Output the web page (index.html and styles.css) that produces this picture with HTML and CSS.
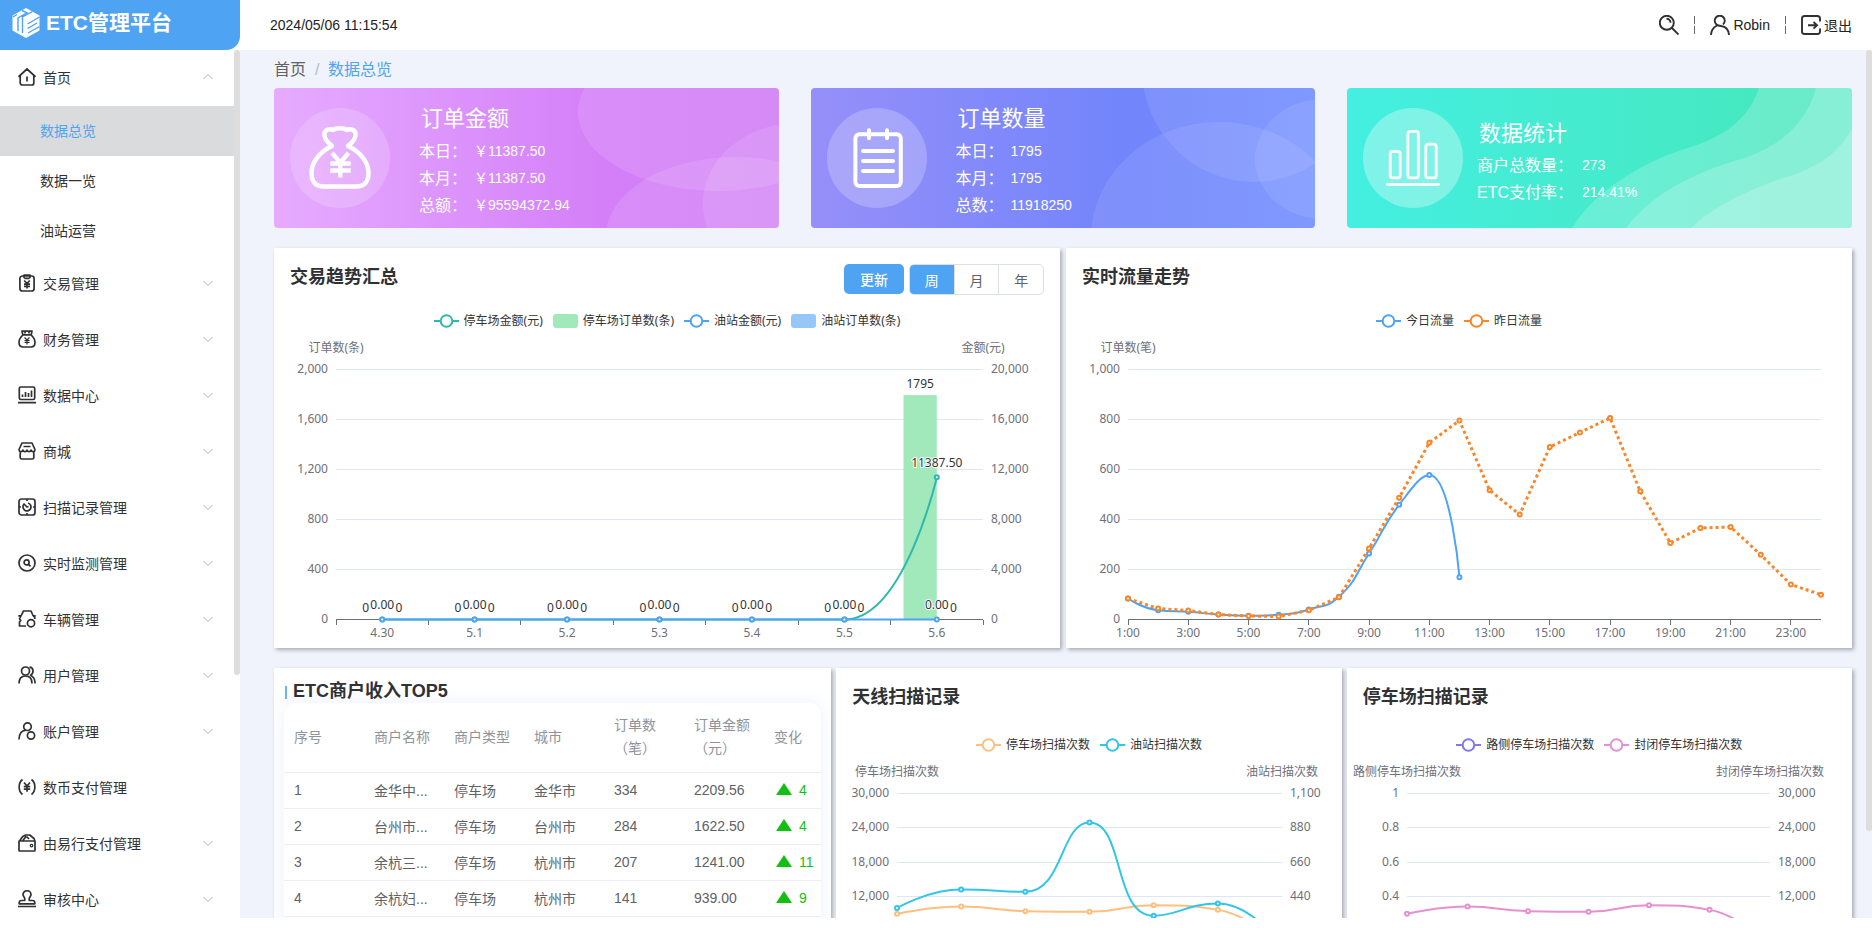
FILE: index.html
```html
<!DOCTYPE html>
<html lang="zh-CN">
<head>
<meta charset="utf-8">
<title>ETC管理平台</title>
<link rel="stylesheet" href="styles.css">
</head>
<body>
<svg class="defs" aria-hidden="true">
  <symbol id="chev" viewBox="0 0 12 12"><path d="M1.500 4L6 8.500 10.500 4" fill="none" stroke="#a9aeb8" stroke-width="1"/></symbol>
  <symbol id="i-home" viewBox="0 0 18 18"><path d="M.5 8.800L9 1l8.500 7.800M2.200 7.500v7.500a2 2 0 0 0 2 2h9.600a2 2 0 0 0 2-2V7.500M9 8.500v5"/></symbol>
  <symbol id="i-trade" viewBox="0 0 18 18"><rect x="1.900" y="2" width="14.200" height="15" rx="2.600"/><path d="M6 1.200h6v2.200l-1.200 1H7.200L6 3.400zM6.200 6.500L9 9.500l2.800-3M9 9.500V14.500M6 10.200h6M6 12.400h6"/></symbol>
  <symbol id="i-bag" viewBox="0 0 18 18"><path d="M4 1.200h10l-.8 3.600H4.800zM7 1v2.500M11 1v2.500M5 4.800C2.500 7 1 9.800 1 12.300c0 3 1.500 4.700 4 4.700h8c2.500 0 4-1.700 4-4.700 0-2.500-1.500-5.300-4-7.500"/><path stroke-width="1.200" d="M6.500 7.500L9 10l2.500-2.500M9 10v4.500M6.500 10.500h5M6.500 12.400h5"/></symbol>
  <symbol id="i-data" viewBox="0 0 18 18"><rect x="1.300" y="1" width="15.400" height="12.500" rx="1.500"/><path d="M0 16.600h18M4.500 8.500V11M7.500 6v5M10.500 7v4M13.500 4.500V11"/></symbol>
  <symbol id="i-shop" viewBox="0 0 18 18"><path d="M4 1h10l3 6.500c0 2.500-3.200 3-4 .5-.8 2.300-3.200 2.300-4 0-.8 2.300-3.200 2.300-4 0-.8 2.500-4 2-4-.5zM5.500 4.500h7M2.200 10.500v5q0 1.500 1.500 1.500h10.600q1.500 0 1.500-1.500v-5"/></symbol>
  <symbol id="i-scan" viewBox="0 0 18 18"><rect x="1" y="1" width="16" height="16" rx="2.500"/><path d="M10 5a4 4 0 1 1-4.300 1.600M5.500 5.500l3.500 3.500 1.500-.5M9 1v2M9 15v2M1 9h2M15 9h2"/></symbol>
  <symbol id="i-monitor" viewBox="0 0 18 18"><circle cx="9" cy="9" r="8"/><circle cx="8.600" cy="8.400" r="2.500"/><path d="M10.500 10.300l2 2"/></symbol>
  <symbol id="i-car" viewBox="0 0 18 18"><path d="M8 16H1.500v-4L2.800 10.500 1.500 9 3.200 5.500 5.500 1h7.500L15 5.500l1.800 2V9M.3 5.800h3M14.700 5.800h3"/><circle cx="13" cy="13.200" r="3.600"/></symbol>
  <symbol id="i-users" viewBox="0 0 18 18"><circle cx="7.500" cy="5" r="4"/><path d="M1 17.500c0-5 2.700-7.500 6.500-7.500s6.500 2.500 6.500 7.500M11.500 1.200c4.500.3 4.500 6.300 1 8 3 1.300 4.600 4 4.600 8.300"/></symbol>
  <symbol id="i-account" viewBox="0 0 18 18"><circle cx="9.500" cy="4.700" r="3.800"/><path d="M1 17.500C1 12 3.500 8.800 7.800 8.200"/><circle cx="13" cy="13.500" r="3.600"/></symbol>
  <symbol id="i-coin" viewBox="0 0 18 18"><path d="M4.500 1.500C0 5 0 13 4.500 16.500M13.500 1.500C18 5 18 13 13.500 16.500M6 4.500l3 3.500 3-3.500M9 8v5.800M5.800 8.700h6.400M5.800 11.200h6.400"/></symbol>
  <symbol id="i-wallet" viewBox="0 0 18 18"><path d="M1 7h16v9.200q0 .8-.8.800H1.800q-.8 0-.8-.8zM1.500 7l3.200-4.500 3-1.500h4l4.300 3.500L17 7M4.500 7l3.700-4.800M8.500 2.500L11 5"/><circle cx="13.500" cy="11.600" r="1.300" stroke-width="1.200"/></symbol>
  <symbol id="i-stamp" viewBox="0 0 18 18"><path d="M6.500 10.500C8 8 5 6.500 5 4.700a4 4 0 0 1 8 0C13 6.500 10 8 11.500 10.500h3q2.300 0 2.300 2.300v1H1.200v-1q0-2.300 2.300-2.300zM0 16.500h18"/></symbol>
</svg>

<div class="app">
  <aside class="side">
    <h1 class="brand">
      <svg width="28" height="30" viewBox="0 0 28 30" aria-hidden="true"><path fill="#fff" d="M14 0l13.500 7.500v15L14 30 .5 22.500v-15z"/><path d="M10 2.500l5 2.300-9 5v13.500M20.500 3.500L10.500 9v16M27.500 9L15.500 16M25 15l-9.500 5.500M27.500 18.500L16 25M5 6.500L1 9" fill="none" stroke="#4ea3f3" stroke-width="1.400"/></svg>
      <span>ETC管理平台</span>
    </h1>
    <nav class="menu">
      <button class="item"><svg><use href="#i-home"/></svg><span>首页</span><svg class="chev up"><use href="#chev"/></svg></button>
      <a class="sub on" href="#">数据总览</a>
      <a class="sub" href="#">数据一览</a>
      <a class="sub" href="#">油站运营</a>
      <button class="item"><svg><use href="#i-trade"/></svg><span>交易管理</span><svg class="chev"><use href="#chev"/></svg></button>
      <button class="item"><svg><use href="#i-bag"/></svg><span>财务管理</span><svg class="chev"><use href="#chev"/></svg></button>
      <button class="item"><svg><use href="#i-data"/></svg><span>数据中心</span><svg class="chev"><use href="#chev"/></svg></button>
      <button class="item"><svg><use href="#i-shop"/></svg><span>商城</span><svg class="chev"><use href="#chev"/></svg></button>
      <button class="item"><svg><use href="#i-scan"/></svg><span>扫描记录管理</span><svg class="chev"><use href="#chev"/></svg></button>
      <button class="item"><svg><use href="#i-monitor"/></svg><span>实时监测管理</span><svg class="chev"><use href="#chev"/></svg></button>
      <button class="item"><svg><use href="#i-car"/></svg><span>车辆管理</span><svg class="chev"><use href="#chev"/></svg></button>
      <button class="item"><svg><use href="#i-users"/></svg><span>用户管理</span><svg class="chev"><use href="#chev"/></svg></button>
      <button class="item"><svg><use href="#i-account"/></svg><span>账户管理</span><svg class="chev"><use href="#chev"/></svg></button>
      <button class="item"><svg><use href="#i-coin"/></svg><span>数币支付管理</span></button>
      <button class="item"><svg><use href="#i-wallet"/></svg><span>由易行支付管理</span><svg class="chev"><use href="#chev"/></svg></button>
      <button class="item"><svg><use href="#i-stamp"/></svg><span>审核中心</span><svg class="chev"><use href="#chev"/></svg></button>
      <i class="thumb side-thumb"></i>
    </nav>
  </aside>

  <div class="page">
    <header class="top">
      <time>2024/05/06 11:15:54</time>
      <div class="tools">
        <button aria-label="搜索"><svg viewBox="0 0 20 20"><circle cx="7.800" cy="7.800" r="7"/><path d="M13 13l6.500 6.500M7.500 3.800a4 4 0 0 1 4 4"/></svg></button>
        <i class="sep"></i>
        <button><svg viewBox="0 0 20 20"><path d="M13 9.500a5 5 0 1 0-6.500 0c1 .9 2.500 1.300 4.500 1.500 5 .6 7.700 4 8 9M1 20c.2-4.500 2.500-7.800 6-9.500"/></svg><span>Robin</span></button>
        <i class="sep"></i>
        <button><svg viewBox="0 0 20 20"><path d="M19 6.500V3.500Q19 1 16.500 1h-13Q1 1 1 3.500v13Q1 19 3.500 19h13q2.500 0 2.500-2.500v-3M7 10.300h9M12.500 7L16 10.300l-3.500 3.300"/></svg><span>退出</span></button>
      </div>
    </header>

    <main class="main">
      <nav class="crumbs"><a href="#">首页</a><i>/</i><a class="cur" href="#">数据总览</a></nav>

      <section class="cards">
        <article class="card">
          <svg class="bg" viewBox="0 0 505 140" preserveAspectRatio="none"><defs><linearGradient id="g1"><stop offset="0" stop-color="#e6abff"/><stop offset=".65" stop-color="#d47ff8"/><stop offset="1" stop-color="#d07cf5"/></linearGradient></defs><path fill="url(#g1)" d="M0 0h505v140H0z"/><g fill="#fff" fill-opacity=".11"><ellipse cx="444" cy="24" rx="140" ry="79"/><ellipse cx="461" cy="148" rx="129" ry="79"/><ellipse cx="524" cy="115" rx="95" ry="80"/></g></svg>
          <svg class="badge" viewBox="0 0 100 100"><circle cx="50" cy="50" r="50" fill="#fff" fill-opacity=".18"/><path d="M42 38C29 44 21.500 55 21.500 65c0 9 4.500 13.500 12 13.500h33c7.500 0 12-4.500 12-13.500 0-10-7.500-21-20.500-27 5-4 8.500-8 7.500-13-1-3.500-5-4.500-8.500-3-3-2.500-11-2.500-14 0-3.500-1.500-7.500-.5-8.500 3-1 5 2.500 9 7.500 13z" fill="none" stroke="#fff" stroke-width="4.500" stroke-linejoin="round"/><path d="M42 45l8.300 9.500L58.600 45M50.300 54v15.500M40.300 55.500h20.400M40.300 62.500h20.400" fill="none" stroke="#fff" stroke-width="4.300"/></svg>
          <div class="info"><h2>订单金额</h2><dl><dt>本日：</dt><dd>￥11387.50</dd><dt>本月：</dt><dd>￥11387.50</dd><dt>总额：</dt><dd>￥95594372.94</dd></dl></div>
        </article>
        <article class="card">
          <svg class="bg" viewBox="0 0 505 140" preserveAspectRatio="none"><defs><linearGradient id="g2"><stop offset="0" stop-color="#968ff9"/><stop offset=".62" stop-color="#7285fb"/><stop offset="1" stop-color="#738fff"/></linearGradient></defs><path fill="url(#g2)" d="M0 0h505v140H0z"/><g fill="#fff" fill-opacity=".09"><ellipse cx="443" cy="-20" rx="112" ry="114"/><ellipse cx="408" cy="150" rx="128" ry="116"/><ellipse cx="512" cy="71" rx="68" ry="60"/></g></svg>
          <svg class="badge" viewBox="0 0 100 100"><circle cx="50" cy="50" r="50" fill="#fff" fill-opacity=".22"/><g fill="none" stroke="#fff" stroke-width="4" stroke-linecap="round"><rect x="28.400" y="26.300" width="45.400" height="51.700" rx="4"/><path d="M42 22.300v8M60 22.300v8M36 43h30M36 53h30M36 63h30"/></g></svg>
          <div class="info"><h2>订单数量</h2><dl><dt>本日：</dt><dd>1795</dd><dt>本月：</dt><dd>1795</dd><dt>总数：</dt><dd>11918250</dd></dl></div>
        </article>
        <article class="card near">
          <svg class="bg" viewBox="0 0 505 140" preserveAspectRatio="none"><defs><linearGradient id="g3"><stop offset="0" stop-color="#44efe1"/><stop offset=".85" stop-color="#45e8bf"/><stop offset="1" stop-color="#45e8bf"/></linearGradient></defs><path fill="url(#g3)" d="M0 0h505v140H0z"/><g fill="#fff" fill-opacity=".2"><path d="M412 0c-12 38-47 52-68 59-44 13-94 41-119 81h280V0z"/><path d="M469 0c-12 45-49 62-71 70-48 13-93 35-119 70h226V0z"/><path d="M505 40c-12 25-36 39-59 47-40 12-80 31-102 53h161z"/></g></svg>
          <svg class="badge" viewBox="0 0 100 100"><circle cx="50" cy="50" r="50" fill="#fff" fill-opacity=".32"/><g fill="none" stroke="#fff" stroke-width="2.800" stroke-linecap="round"><rect x="27.200" y="43.400" width="10" height="26.500" rx="2.500"/><rect x="44.900" y="23.400" width="10.400" height="46.500" rx="2.500"/><rect x="62.800" y="36.200" width="10.400" height="33.700" rx="2.500"/><path d="M24.500 76.300h51"/></g></svg>
          <div class="info"><h2>数据统计</h2><dl><dt>商户总数量：</dt><dd>273</dd><dt>ETC支付率：</dt><dd>214.41%</dd></dl></div>
        </article>
      </section>

      <section class="row two">
        <article class="panel">
          <div class="head"><h3>交易趋势汇总</h3>
            <div class="acts"><button class="refresh">更新</button><div class="seg"><button class="on">周</button><button>月</button><button>年</button></div></div>
          </div>
          <div class="chart" data-chart="trend"></div>
        </article>
        <article class="panel">
          <div class="head"><h3>实时流量走势</h3></div>
          <div class="chart" data-chart="flow"></div>
        </article>
      </section>

      <section class="row three">
        <article class="panel rank">
          <h3>ETC商户收入TOP5</h3>
          <div class="sheet">
            <table>
              <thead><tr><th>序号</th><th>商户名称</th><th>商户类型</th><th>城市</th><th>订单数（笔）</th><th>订单金额（元）</th><th>变化</th></tr></thead>
              <tbody>
                <tr><td>1</td><td>金华中...</td><td>停车场</td><td>金华市</td><td>334</td><td>2209.56</td><td class="rise">4</td></tr>
                <tr><td>2</td><td>台州市...</td><td>停车场</td><td>台州市</td><td>284</td><td>1622.50</td><td class="rise">4</td></tr>
                <tr><td>3</td><td>余杭三...</td><td>停车场</td><td>杭州市</td><td>207</td><td>1241.00</td><td class="rise">11</td></tr>
                <tr><td>4</td><td>余杭妇...</td><td>停车场</td><td>杭州市</td><td>141</td><td>939.00</td><td class="rise">9</td></tr>
              </tbody>
            </table>
          </div>
        </article>
        <article class="panel">
          <div class="head"><h3>天线扫描记录</h3></div>
          <div class="chart low" data-chart="antenna"></div>
        </article>
        <article class="panel">
          <div class="head"><h3>停车场扫描记录</h3></div>
          <div class="chart low" data-chart="parking"></div>
        </article>
      </section>
      <i class="thumb main-thumb"></i>
    </main>
  </div>
</div>
<script src="charts.js"></script>
</body>
</html>
```
FILE: styles.css
```css
* { box-sizing: border-box; }
body { margin: 0; background: #fff; font-family: "Liberation Sans", "Noto Sans CJK SC", sans-serif; font-size: 14px; color: #303133; }
button { border: 0; background: none; padding: 0; font: inherit; color: inherit; cursor: pointer; }
a { color: inherit; text-decoration: none; }
h1, h2, h3, dl, dd, ul { margin: 0; padding: 0; }
i { font-style: normal; }
.defs { display: none; }

.app { display: flex; height: calc(100vh - 10px); overflow: hidden; }
.side { width: 240px; flex: none; display: flex; flex-direction: column; background: #fff; }
.brand { display: flex; align-items: center; gap: 6px; height: 50px; flex: none; padding: 0 12px 4px; background: #4ea3f3; color: #fff; font-size: 21px; line-height: 30px; border-bottom-right-radius: 14px; }
.menu { position: relative; flex: 1; min-height: 0; overflow-y: auto; scrollbar-width: none; display: flex; flex-direction: column; padding-right: 6px; }
.item { display: flex; align-items: center; flex: none; height: 56px; padding: 0 20px 2px 18px; gap: 7px; text-align: left; }
.item svg { width: 18px; height: 18px; fill: none; stroke: #303133; stroke-width: 1.7; stroke-linejoin: round; }
.item .chev { width: 12px; height: 12px; margin-left: auto; }
.item .up { transform: rotate(180deg); }
.sub { flex: none; height: 50px; line-height: 51px; padding-left: 40px; }
.sub.on { background: #dadbdd; color: #4ea3f3; }
.thumb { position: absolute; right: 0; top: 0; width: 6px; border-radius: 3px; background: #ddd; }
.side-thumb { height: 72%; }
.main-thumb { height: 90%; }

.page { flex: 1; min-width: 0; display: flex; flex-direction: column; background: #f0f3fc; }
.top { flex: none; height: 50px; display: flex; align-items: center; justify-content: space-between; padding: 0 20px 0 30px; background: #fff; color: #222; }
.tools { display: flex; align-items: center; gap: 15px; }
.tools button { display: flex; align-items: center; gap: 3px; }
.tools svg { width: 20px; height: 20px; fill: none; stroke: #303133; stroke-width: 1.9; }
.sep { width: 1px; height: 18px; background: linear-gradient(#666 8px, transparent 8px, transparent 10px, #666 10px); }

.main { position: relative; flex: 1; min-height: 0; overflow-y: auto; scrollbar-width: none; padding: 0 20px 0 34px; }
.crumbs { display: flex; align-items: center; height: 38px; padding-top: 2px; font-size: 16px; line-height: 24px; color: #606266; }
.crumbs i { margin: 0 9px; width: 4px; color: #b6bac2; }
.crumbs .cur { color: #4ea3f3; }

.cards { display: flex; justify-content: space-between; margin-bottom: 20px; }
.card { position: relative; width: 32%; height: 140px; display: flex; align-items: center; padding-left: 16px; gap: 29px; border-radius: 4px; overflow: hidden; color: #fff; }
.card.near { gap: 14px; }
.bg { position: absolute; inset: 0; width: 100%; height: 100%; }
.badge { position: relative; flex: none; width: 100px; height: 100px; }
.info { position: relative; padding-top: 2px; }
.info h2 { font-size: 22px; font-weight: 400; line-height: 38px; padding-left: 2px; }
.info dl { display: grid; grid-template-columns: auto auto; justify-content: start; column-gap: 7px; }
.near .info { padding-top: 6px; }
.near h2 { line-height: 36px; }
.near dl { column-gap: 9px; }
.info dt { font-size: 16px; line-height: 27px; }
.info dd { font-size: 14px; line-height: 27px; }

.row { display: grid; gap: 6px; margin-bottom: 20px; }
.two { grid-template-columns: 1fr 1fr; }
.three { grid-template-columns: 557fr 505fr 505fr; column-gap: 5px; }
.panel { min-width: 0; background: #fff; box-shadow: 2px 2px 4px rgba(0, 0, 0, .3); }
.head { display: flex; align-items: flex-start; justify-content: space-between; height: 46px; padding: 16px 16px 0; }
.panel h3 { font-size: 18px; line-height: 26px; }
.acts { display: flex; align-items: flex-start; gap: 5px; }
.refresh { width: 60px; height: 30px; border-radius: 5px; background: #4ea3f3; color: #fff; font-weight: 500; }
.seg { display: flex; width: 135px; height: 31px; border: 1px solid #dcdfe6; border-radius: 5px; overflow: hidden; color: #606266; }
.seg button { flex: 1; border-left: 1px solid #dcdfe6; }
.seg .on { border: 0; background: #4ea3f3; color: #fff; }

.chart { padding-top: 17px; font-family: "Noto Sans", "Noto Sans CJK SC", sans-serif; font-size: 12px; }
.chart.low { padding-top: 21px; }
.legend { display: flex; justify-content: center; gap: 10px; height: 19px; list-style: none; line-height: 20px; color: #333; }
.legend li { display: flex; align-items: center; gap: 5px; white-space: nowrap; }
.plot { display: block; width: 100%; }
.plot text { font-size: 12px; fill: #6e7079; dominant-baseline: central; }
.plot .mark { fill: #333; stroke: #fff; stroke-width: 2px; paint-order: stroke; }
.plot .split { stroke: #e0e6f1; shape-rendering: crispEdges; }
.plot .axis { stroke: #6e7079; shape-rendering: crispEdges; }

.rank { padding: 10px 10px 0; overflow: hidden; }
.rank h3 { display: flex; align-items: center; gap: 6px; height: 25px; }
.rank h3::before { content: ""; width: 2px; height: 13px; margin: 4px 0 0 1px; background: #6db1f7; }
.sheet { height: 300px; border-radius: 12px; box-shadow: 0 0 20px #eef1fc; }
.rank table { width: 100%; table-layout: fixed; border-collapse: collapse; color: #606266; }
.rank th { width: 80px; height: 69px; padding: 0 10px; font-weight: 400; text-align: left; line-height: 23px; color: #909399; }
.rank th:last-child { width: auto; padding-right: 0; }
.rank td { height: 36px; padding: 0 10px; white-space: nowrap; }
.rank tr { border-bottom: 1px solid #ebeef5; }
.rank .rise { color: #13bf13; padding-right: 0; }
.rise::before { content: ""; display: inline-block; margin: 0 7px 0 2px; border: solid transparent; border-width: 0 8px 12px; border-bottom-color: #13bf13; }
```
FILE: charts.js
```js
const NS = 'http://www.w3.org/2000/svg';
const hours = Array.from({ length: 24 }, (_, i) => (i + 1) + ':00');
const scans = [9009, 10296, 9478, 9357, 10522, 9704, 3000];

const charts = {
  trend: {
    height: 318, plot: 250, left: 62, right: 77, band: true,
    labels: ['4.30', '5.1', '5.2', '5.3', '5.4', '5.5', '5.6'], step: 1,
    axes: [{ name: '订单数(条)', max: 2000 }, { name: '金额(元)', max: 20000 }],
    series: [
      { name: '停车场金额(元)', color: '#2fb9ad', axis: 1, smooth: true, marks: 2, data: [0, 0, 0, 0, 0, 0, 11387.5] },
      { name: '停车场订单数(条)', color: '#a1e8ba', bar: -1, data: [0, 0, 0, 0, 0, 0, 1795] },
      { name: '油站金额(元)', color: '#4ea3f3', axis: 1, smooth: true, marks: 2, data: [0, 0, 0, 0, 0, 0, 0] },
      { name: '油站订单数(条)', color: '#95c8f8', bar: 1, data: [0, 0, 0, 0, 0, 0, 0] }
    ]
  },
  flow: {
    height: 318, plot: 250, left: 62, right: 31, labels: hours, step: 2,
    axes: [{ name: '订单数(笔)', max: 1000 }],
    series: [
      { name: '今日流量', color: '#4ea3f3', smooth: true, data: [84, 37, 31, 20, 15, 19, 40, 91, 264, 459, 578, 169] },
      { name: '昨日流量', color: '#fb8527', dotted: true, data: [84, 44, 36, 20, 14, 12, 37, 89, 284, 487, 707, 796, 517, 420, 690, 748, 806, 513, 306, 366, 370, 259, 140, 99] }
    ]
  },
  antenna: {
    height: 250, plot: 172, left: 61, right: 59, labels: ['4.30', '5.1', '5.2', '5.3', '5.4', '5.5', '5.6'], step: 1,
    axes: [{ name: '停车场扫描次数', max: 30000 }, { name: '油站扫描次数', max: 1100 }],
    series: [
      { name: '停车场扫描次数', color: '#ffbf7f', smooth: true, data: scans },
      { name: '油站扫描次数', color: '#32c5e9', axis: 1, smooth: true, data: [367, 486, 471, 915, 318, 397, 120] }
    ]
  },
  parking: {
    height: 250, plot: 172, left: 60, right: 82, labels: ['4.30', '5.1', '5.2', '5.3', '5.4', '5.5', '5.6'], step: 1,
    axes: [{ name: '路侧停车场扫描次数', max: 1 }, { name: '封闭停车场扫描次数', max: 30000 }],
    series: [
      { name: '路侧停车场扫描次数', color: '#8378ea', smooth: true, data: [0, 0, 0, 0, 0, 0, 0] },
      { name: '封闭停车场扫描次数', color: '#e690d1', axis: 1, smooth: true, data: scans }
    ]
  }
};

function add(parent, tag, attrs, text) {
  const el = document.createElementNS(NS, tag);
  for (const k in attrs) el.setAttribute(k, attrs[k]);
  if (text !== undefined) el.textContent = text;
  parent.appendChild(el);
  return el;
}

function within(v, a, b) { return Math.max(Math.min(a, b), Math.min(Math.max(a, b), v)); }

// Bezier path whose handles never leave the box between neighbouring points.
function smoothPath(pts) {
  let d = 'M' + pts[0];
  let out = pts[0];
  for (let i = 1; i < pts.length; i++) {
    const p = pts[i], q = pts[i - 1], n = pts[i + 1];
    let inn = p, next = p;
    if (n) {
      const a = Math.hypot(p[0] - q[0], p[1] - q[1]);
      const b = Math.hypot(n[0] - p[0], n[1] - p[1]);
      const r = b / (a + b);
      next = [0, 1].map(k => within(p[k] + (n[k] - q[k]) * 0.5 * r, p[k], n[k]));
      inn = [0, 1].map(k => within(p[k] - (next[k] - p[k]) * a / b, q[k], p[k]));
      next = [0, 1].map(k => p[k] + (p[k] - inn[k]) * b / a);
    }
    d += 'C' + out + ' ' + inn + ' ' + p;
    out = next;
  }
  return d;
}

function drawLegend(host, c) {
  const ul = document.createElement('ul');
  ul.className = 'legend';
  c.series.forEach(s => {
    const li = document.createElement('li');
    const svg = add(li, 'svg', { width: 25, height: 14 });
    if (s.bar) add(svg, 'rect', { width: 25, height: 14, rx: 3, fill: s.color });
    else {
      add(svg, 'path', { d: 'M0 7h25', stroke: s.color, 'stroke-width': 2 });
      add(svg, 'circle', { cx: 12.5, cy: 7, r: 5.8, fill: '#fff', stroke: s.color, 'stroke-width': 2 });
    }
    li.append(s.name);
    ul.appendChild(li);
  });
  host.appendChild(ul);
}

function drawPlot(svg, c) {
  svg.replaceChildren();
  const w = svg.clientWidth, top = 39.5, base = top + c.plot;
  const x0 = c.left, x1 = w - c.right, span = x1 - x0, count = c.labels.length;
  const slot = c.band ? span / count : span / (count - 1);
  const xAt = i => x0 + slot * (i + (c.band ? 0.5 : 0));
  const yAt = (v, s) => base - v / c.axes[s.axis || 0].max * c.plot;

  for (let i = 0; i <= 5; i++) {
    const y = base - c.plot * i / 5;
    add(svg, 'line', { x1: x0, x2: x1, y1: y, y2: y, class: i ? 'split' : 'axis' });
    c.axes.forEach((a, k) => add(svg, 'text', { x: k ? x1 + 8 : x0 - 8, y: y - 1, 'text-anchor': k ? 'start' : 'end' }, (a.max * i / 5).toLocaleString('en-US')));
  }
  c.axes.forEach((a, k) => add(svg, 'text', { x: k ? x1 : x0, y: 17, 'text-anchor': 'middle' }, a.name));
  for (let i = 0; i <= count; i += c.step) {
    const x = x0 + slot * i;
    if (x <= x1 + 1) add(svg, 'line', { x1: x, x2: x, y1: base, y2: base + 5, class: 'axis' });
    if (i < count) add(svg, 'text', { x: xAt(i), y: base + 13, 'text-anchor': 'middle' }, c.labels[i]);
  }

  const half = slot * 0.36;
  c.series.filter(s => s.bar).forEach(s => s.data.forEach((v, i) => {
    const x = xAt(i) + (s.bar < 0 ? -half : 0), y = yAt(v, s);
    add(svg, 'rect', { x, y, width: half, height: base - y, fill: s.color });
  }));
  c.series.filter(s => !s.bar).forEach(s => {
    const pts = s.data.map((v, i) => [xAt(i), yAt(v, s)]);
    add(svg, 'path', {
      d: s.smooth ? smoothPath(pts) : 'M' + pts.join('L'), fill: 'none', stroke: s.color,
      'stroke-width': s.dotted ? 3 : 2, 'stroke-dasharray': s.dotted ? '3 3' : 'none'
    });
    pts.forEach(p => add(svg, 'circle', { cx: p[0], cy: p[1], r: 2, fill: '#fff', stroke: s.color, 'stroke-width': 2 }));
  });
  c.series.forEach(s => s.data.forEach((v, i) => {
    if (s.bar) add(svg, 'text', { x: xAt(i) + s.bar * half / 2, y: yAt(v, s) - 12, 'text-anchor': 'middle', class: 'mark' }, v);
    else if (s.marks) add(svg, 'text', { x: xAt(i), y: yAt(v, s) - 15, 'text-anchor': 'middle', class: 'mark' }, v.toFixed(s.marks));
  }));
}

document.querySelectorAll('[data-chart]').forEach(host => {
  const c = charts[host.dataset.chart];
  drawLegend(host, c);
  const svg = add(host, 'svg', { class: 'plot', height: c.height });
  drawPlot(svg, c);
  window.addEventListener('resize', () => drawPlot(svg, c));
});
```
